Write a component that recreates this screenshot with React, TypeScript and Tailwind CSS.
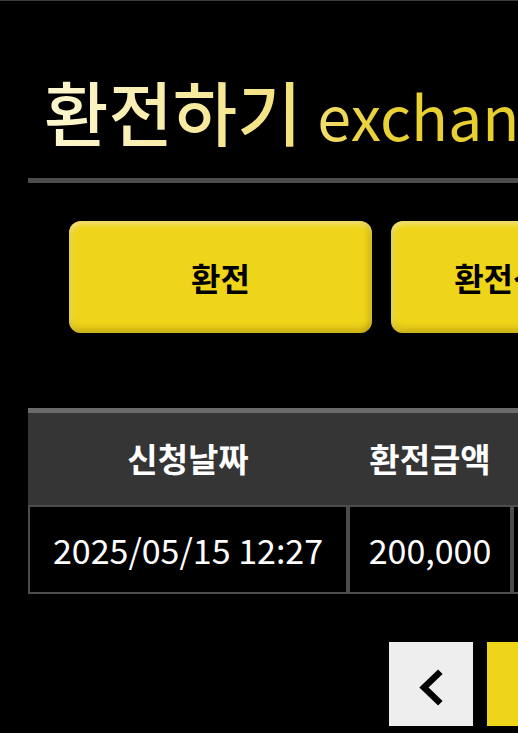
import React from "react";

const headers = ["신청날짜", "환전금액", "처리상태", "처리날짜"];
const rows = [["2025/05/15 12:27", "200,000", "대기", "-"]];

function ChevronLeft() {
  return (
    <svg width="30" height="48" viewBox="0 0 30 48" fill="none">
      <path d="M22 14 L8 27.5 L22 41" stroke="#000" strokeWidth="6.5" strokeLinecap="square" strokeLinejoin="miter" />
    </svg>
  );
}

export default function App() {
  return (
    <div className="w-full h-[733px] overflow-hidden bg-black border-t border-[#3a3a3a] font-['Noto_Sans_CJK_KR','Noto_Sans',sans-serif]">
      <div className="w-[1100px] pl-[28px]">
        <h1 className="mt-[70px] h-[80px] pl-[16px] text-[70px] leading-[80px] font-medium whitespace-nowrap">
          <span className="bg-[linear-gradient(90deg,#fdf7d0_0px,#f8eca6_130px,#f2df74_270px,#e9d136_330px,#e6cc28_600px)] bg-clip-text text-transparent">
            환전하기 <span className="text-[61px] leading-none font-normal">exchange</span>
          </span>
        </h1>

        <div className="mt-[27px] h-[5px] bg-[#4c4c4c]" />

        <div className="mt-[38px] ml-[41px] flex gap-[19px]">
          {["환전", "환전신청내역"].map((label) => (
            <button
              key={label}
              className="w-[303px] h-[112px] shrink-0 rounded-[12px] bg-[#efd519] text-black text-[32px] font-bold shadow-[inset_0_-5px_6px_rgba(150,120,0,0.35),inset_0_4px_5px_rgba(255,255,255,0.35),inset_4px_0_5px_rgba(255,255,255,0.2),inset_-4px_0_5px_rgba(150,120,0,0.25)]"
            >
              {label}
            </button>
          ))}
        </div>

        <div className="mt-[75px]">
          <div className="grid grid-cols-[320px_164px_200px_200px] border-t-[5px] border-[#6a6a6a] bg-[#363536] h-[97px]">
            {headers.map((h) => (
              <div key={h} className="flex items-center justify-center text-white text-[33px] font-bold">
                {h}
              </div>
            ))}
          </div>
          <div className="grid grid-cols-[320px_164px_200px_200px] h-[89px]">
            {rows[0].map((c, i) => (
              <div key={i} className="flex items-center justify-center border-2 border-[#4c4c4c] bg-black text-white text-[34px]">
                {c}
              </div>
            ))}
          </div>
        </div>

        <div className="mt-[48px] ml-[361px] flex gap-[14px]">
          <button className="w-[84px] h-[84px] flex items-center justify-center bg-[#efeeef]">
            <ChevronLeft />
          </button>
          <button className="w-[84px] h-[84px] flex items-center justify-center bg-[#efd519] text-black text-[30px] font-bold">
            1
          </button>
        </div>
      </div>
    </div>
  );
}
